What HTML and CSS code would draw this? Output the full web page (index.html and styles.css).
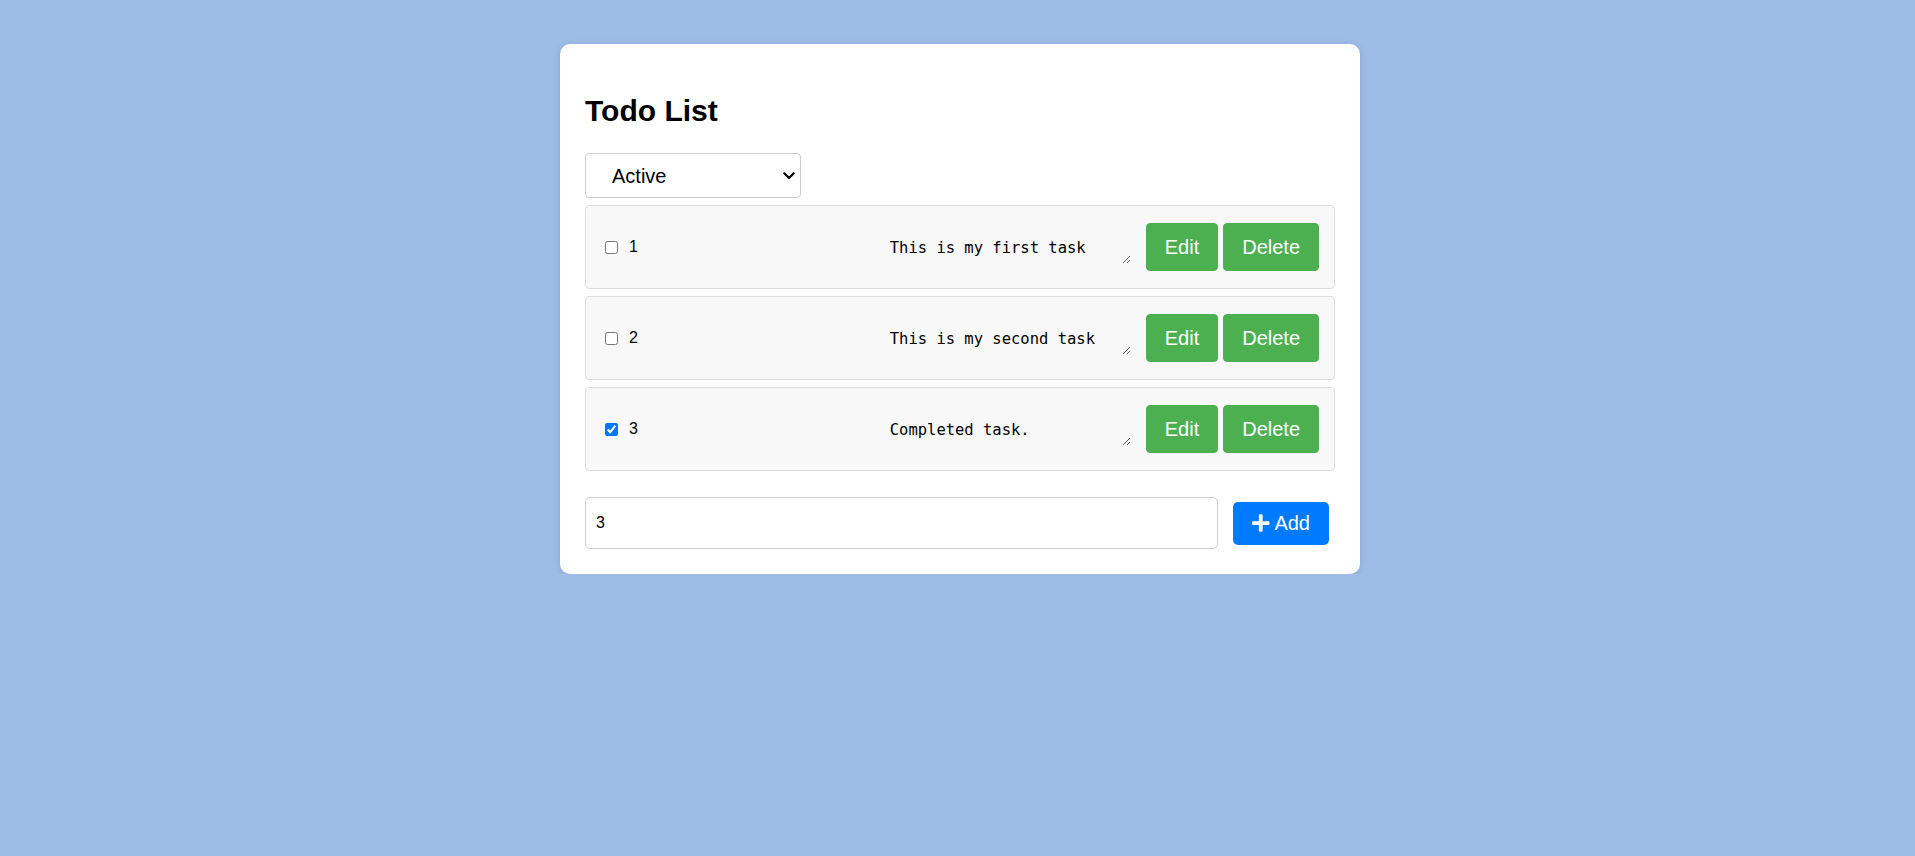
FILE: index.html
```html
<!DOCTYPE html>
<html lang="en">
<head>
<meta charset="utf-8">
<title>Todo List</title>
<link rel="stylesheet" href="styles.css">
</head>
<body>
<div class="card">
  <h1 class="title">Todo List</h1>
  <div class="filter-wrap">
    <select class="filter">
      <option>All</option>
      <option selected>Active</option>
      <option>Completed</option>
    </select>
    <svg class="chevron" viewBox="0 0 12 8" aria-hidden="true"><path d="M1.3 1.3 L6 6 L10.7 1.3" fill="none" stroke="#000" stroke-width="2.2" stroke-linecap="round" stroke-linejoin="round"/></svg>
  </div>
  <ul class="list">
    <li class="item">
      <div class="item-left"><input type="checkbox" class="check"><span class="num">1</span></div>
      <textarea class="text" rows="1">This is my first task</textarea>
      <div class="actions"><button class="btn">Edit</button><button class="btn">Delete</button></div>
    </li>
    <li class="item">
      <div class="item-left"><input type="checkbox" class="check"><span class="num">2</span></div>
      <textarea class="text" rows="1">This is my second task</textarea>
      <div class="actions"><button class="btn">Edit</button><button class="btn">Delete</button></div>
    </li>
    <li class="item">
      <div class="item-left"><input type="checkbox" class="check" checked><span class="num">3</span></div>
      <textarea class="text" rows="1">Completed task.</textarea>
      <div class="actions"><button class="btn">Edit</button><button class="btn">Delete</button></div>
    </li>
  </ul>
  <form class="add-form" onsubmit="return false">
    <input class="add-input" type="text" value="3">
    <button class="add-btn" type="button"><svg class="plus" viewBox="0 0 448 512" aria-hidden="true"><path d="M416 208H272V64c0-17.670-14.330-32-32-32h-32c-17.670 0-32 14.330-32 32v144H32c-17.670 0-32 14.330-32 32v32c0 17.670 14.330 32 32 32h144v144c0 17.670 14.330 32 32 32h32c17.670 0 32-14.330 32-32V304h144c17.670 0 32-14.330 32-32v-32c0-17.670-14.330-32-32-32z" fill="currentColor"/></svg> Add</button>
  </form>
</div>
</body>
</html>
```

FILE: styles.css
```css
html, body {
  margin: 0;
  background: #9dbce6;
}
body {
  padding: 44px 0 0 5px;
  font-family: "Liberation Sans", Arial, sans-serif;
  color: #000;
}
.card {
  box-sizing: border-box;
  width: 800px;
  margin: 0 auto;
  padding: 0 25px 25px;
  background: #fff;
  border-radius: 10px;
  box-shadow: 0 2px 8px rgba(0, 0, 0, 0.12);
  overflow: hidden;
}
.title {
  font-size: 30px;
  line-height: 34px;
  font-weight: bold;
  margin: 0;
  padding: 50px 0 25px 0;
}
.filter-wrap {
  position: relative;
  width: 216px;
  margin: 0 0 7px 0;
}
.filter {
  display: block;
  box-sizing: border-box;
  width: 216px;
  height: 45px;
  padding: 0 24px 0 26px;
  font-family: "Liberation Sans", Arial, sans-serif;
  font-size: 20px;
  color: #000;
  background: #fff;
  border: 1px solid #ccc;
  border-radius: 4px;
  appearance: none;
  -webkit-appearance: none;
  outline: none;
}
.chevron {
  position: absolute;
  right: 6px;
  top: 19px;
  width: 12px;
  height: 8px;
  pointer-events: none;
}
.list {
  list-style: none;
  margin: 0 0 26px 0;
  padding: 0;
  display: flex;
  flex-direction: column;
  gap: 7px;
}
.item {
  box-sizing: border-box;
  height: 84px;
  display: flex;
  align-items: center;
  padding: 0 15px;
  background: #f8f8f8;
  border: 1px solid #ddd;
  border-radius: 4px;
}
.item-left {
  flex: 1;
  display: flex;
  align-items: center;
}
.check {
  margin: 3px 3px 3px 4px;
  width: 13px;
  height: 13px;
}
.num {
  margin-left: 8px;
  font-size: 16px;
}
.text {
  box-sizing: border-box;
  width: 249px;
  height: 33px;
  padding: 8px;
  margin: 0 15px 0 0;
  border: none;
  background: transparent;
  font-family: "DejaVu Sans Mono", "Liberation Mono", monospace;
  font-size: 15.5px;
  line-height: 18px;
  color: #000;
  overflow: hidden;
  outline: none;
}
.actions {
  display: flex;
  gap: 5px;
}
.btn {
  font-family: "Liberation Sans", Arial, sans-serif;
  font-size: 20px;
  line-height: 24px;
  padding: 11px 18px;
  color: #fff;
  background: #4caf50;
  border: 1px solid #4caf50;
  border-radius: 4px;
  cursor: pointer;
}
.add-form {
  display: flex;
  align-items: center;
  gap: 15px;
  margin: 0;
}
.add-input {
  flex: 1;
  box-sizing: border-box;
  height: 52px;
  padding: 0 10px;
  font-family: "Liberation Sans", Arial, sans-serif;
  font-size: 16px;
  color: #000;
  border: 1px solid #ccc;
  border-radius: 5px;
  outline: none;
}
.add-btn {
  display: inline-flex;
  align-items: center;
  height: 43px;
  padding: 0 19px 0 19px;
  margin-right: 6px;
  font-family: "Liberation Sans", Arial, sans-serif;
  font-size: 20px;
  color: #fff;
  background: #007bff;
  border: none;
  border-radius: 5px;
  cursor: pointer;
  white-space: pre;
}
.plus {
  width: 17.5px;
  height: 20px;
  margin-top: -1px;
}
```
